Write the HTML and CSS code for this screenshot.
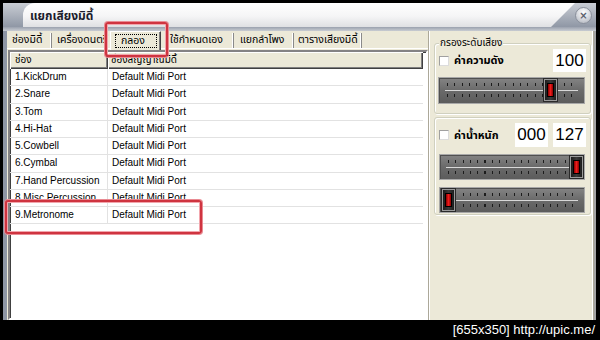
FILE: index.html
```html
<!DOCTYPE html>
<html lang="th">
<head>
<meta charset="utf-8">
<title>แยกเสียงมิดี้</title>
<link rel="stylesheet" href="styles.css">
</head>
<body>
<div class="window">
  <div class="titlebar">
    <div class="tb-main"><span class="title">แยกเสียงมิดี้</span></div>
    <div class="tb-close"><span class="close-btn">×</span></div>
  </div>
  <div class="tb-band"></div>
  <div class="body">
    <div class="left">
      <div class="tabs">
        <div class="tab t1">ช่องมิดี้</div>
        <div class="tab t2">เครื่องดนตรี</div>
        <div class="tab t3 selected"><span class="focus">กลอง</span></div>
        <div class="tab t4">ใช้กำหนดเอง</div>
        <div class="tab t5">แยกลำโพง</div>
        <div class="tab t6">ตารางเสียงมิดี้</div>
      </div>
      <div class="list">
        <div class="lv-header">
          <div class="hc c1">ช่อง</div>
          <div class="hc c2">ช่องสัญญาณมิดี้</div>
        </div>
        <div class="row"><div class="c1">1.KickDrum</div><div class="c2">Default Midi Port</div></div>
        <div class="row"><div class="c1">2.Snare</div><div class="c2">Default Midi Port</div></div>
        <div class="row"><div class="c1">3.Tom</div><div class="c2">Default Midi Port</div></div>
        <div class="row"><div class="c1">4.Hi-Hat</div><div class="c2">Default Midi Port</div></div>
        <div class="row"><div class="c1">5.Cowbell</div><div class="c2">Default Midi Port</div></div>
        <div class="row"><div class="c1">6.Cymbal</div><div class="c2">Default Midi Port</div></div>
        <div class="row"><div class="c1">7.Hand Percussion</div><div class="c2">Default Midi Port</div></div>
        <div class="row"><div class="c1">8.Misc Percussion</div><div class="c2">Default Midi Port</div></div>
        <div class="row"><div class="c1">9.Metronome</div><div class="c2">Default Midi Port</div></div>
      </div>
    </div>
    <div class="right">
      <div class="group g1">
        <div class="legend">กรองระดับเสียง</div>
        <div class="grow">
          <span class="check"></span>
          <span class="glabel">ค่าความดัง</span>
          <span class="value">100</span>
        </div>
        <div class="slider s1"><div class="thumb" style="left:105px"><i></i></div></div>
      </div>
      <div class="group g2">
        <div class="grow">
          <span class="check"></span>
          <span class="glabel">ค่าน้ำหนัก</span>
          <span class="value">000</span>
          <span class="value">127</span>
        </div>
        <div class="slider s2"><div class="thumb" style="left:130px"><i></i></div></div>
        <div class="slider s3"><div class="thumb" style="left:2px"><i></i></div></div>
      </div>
    </div>
  </div>
</div>
<div class="footer">[655x350] http://upic.me/</div>
<div class="mark mark-tab"></div>
<div class="mark mark-row"></div>
</body>
</html>
```
FILE: styles.css
```css
html, body {
  margin: 0;
  padding: 0;
}
body {
  width: 600px;
  height: 340px;
  background: #000;
  overflow: hidden;
  position: relative;
  font-family: Tahoma, "Noto Sans Thai", "Loma", "Garuda", "Norasi", "Liberation Sans", sans-serif;
  font-size: 11px;
  color: #000;
}
.window {
  height: 320px;
  box-sizing: border-box;
  padding: 3px 4px 0 3px;
  display: flex;
  flex-direction: column;
}
.titlebar {
  height: 24px;
  display: flex;
  background: linear-gradient(#c9cdd4, #8f97a5);
  flex: none;
}
.tb-main {
  flex: 1;
  margin-left: 20px;
  border-top-left-radius: 12px;
  background: linear-gradient(#ffffff, #f5f5f6 55%, #dfe0e3);
  clip-path: polygon(0 0, 100% 0, calc(100% - 24px) 100%, 0 100%);
  display: flex;
  align-items: center;
  padding-left: 7px;
}
.title {
  font-weight: bold;
  font-size: 12px;
  color: #1c1c2c;
  margin-top: 2px;
}
.tb-close {
  width: 21px;
  display: flex;
  align-items: center;
}
.close-btn {
  width: 15px;
  height: 15px;
  border-radius: 50%;
  border: 1px solid #8a909c;
  background: radial-gradient(circle at 50% 30%, #ffffff, #cfd2d8 60%, #a9aeb8);
  color: #5a606c;
  font-family: "DejaVu Sans", sans-serif;
  font-weight: bold;
  font-size: 10px;
  line-height: 15px;
  text-align: center;
  margin-top: 1px;
}
.tb-band {
  height: 4px;
  background: linear-gradient(#9aa1ae, #c8ccd2);
  flex: none;
}
.body {
  flex: 1;
  display: flex;
  background: #ece9d8;
  border-left: 4px solid #8d95a4;
  min-height: 0;
}
.left {
  width: 421px;
  display: flex;
  flex-direction: column;
}
.tabs {
  height: 17px;
  border-bottom: 1px solid #fff;
  display: flex;
  align-items: flex-start;
  padding-left: 1px;
  font-size: 10.5px;
}
.tab {
  box-sizing: border-box;
  height: 15px;
  margin-top: 2px;
  line-height: 14px;
  white-space: nowrap;
  border-right: 1px solid #8a8a8a;
  box-shadow: inset -1px 0 0 #fff;
  padding-left: 4px;
}
.t1 { width: 44px; }
.t2 { width: 58px; padding-left: 5px; border-right: none; box-shadow: none; overflow-x: clip; }
.t3 { width: 51px; }
.t4 { width: 73px; padding-left: 9px; }
.t5 { width: 60px; padding-left: 6px; }
.t6 { width: 68px; padding-left: 4px; }
.tab.selected {
  height: 19px;
  margin-top: 0;
  margin-bottom: -1px;
  background: #ece9d8;
  border-left: 1px solid #fff;
  border-top: 1px solid #fff;
  border-right: 1px solid #404040;
  box-shadow: inset -1px 0 0 #808080;
  padding: 2px 3px 0 4px;
  position: relative;
}
.focus {
  display: block;
  height: 12px;
  line-height: 12px;
  border: 1px dotted #000;
  padding-left: 5px;
}
.list {
  margin: 1px 0 0 1px;
  flex: 1;
  background: #fff;
  border: 2px solid;
  border-color: #848284 #fff #fff #848284;
  box-shadow: inset 1px 1px 0 #404040;
  font-family: "Liberation Sans", Arial, sans-serif;
  font-size: 10px;
  overflow: hidden;
}
.lv-header {
  display: flex;
  height: 17px;
  width: 413px;
  background: #ece9d8;
}
.hc {
  box-sizing: border-box;
  height: 17px;
  line-height: 16px;
  font-family: Tahoma, "Noto Sans Thai", "Loma", "Garuda", "Liberation Sans", sans-serif;
  box-shadow: inset 1px 1px 0 #fff, inset -1px -1px 0 #404040, inset -2px -2px 0 #808080;
}
.row {
  display: flex;
  height: 17.25px;
  width: 413px;
  box-sizing: border-box;
  border-bottom: 1px solid #e2e2e2;
  line-height: 16px;
}
.c1 {
  width: 98px;
  box-sizing: border-box;
  padding-left: 5px;
  white-space: nowrap;
}
.row .c1 { border-right: 1px solid #e2e2e2; }
.c2 {
  flex: 1;
  padding-left: 4px;
  white-space: nowrap;
}
.hc.c2 { padding-left: 3px; }
.right {
  flex: 1;
  box-sizing: border-box;
  border-left: 1px solid #aca899;
  box-shadow: inset 1px 0 0 #fff, inset -1px 0 0 #aca899, inset -2px 0 0 #fff;
  border-right: 2px solid #a3a3a3;
  padding: 12px 2px 0 5px;
}
.group {
  border: 1px solid #d0d0bf;
  border-radius: 3px;
  box-shadow: inset 1px 1px 0 #fff, 1px 1px 0 #fff;
  box-sizing: border-box;
  width: 157px;
}
.legend {
  display: table;
  margin: -7px 0 0 4px;
  padding: 0 1px;
  height: 9px;
  line-height: 12px;
  font-size: 10px;
  background: #ece9d8;
}
.grow {
  display: flex;
  align-items: center;
  gap: 5px;
}
.g1 .grow { height: 23px; }
.g1 { padding-bottom: 9px; }
.g2 { margin-top: 3px; padding-top: 5px; padding-bottom: 1px; }
.g2 .grow { height: 24px; }
.check {
  width: 10px;
  height: 10px;
  box-sizing: border-box;
  background: #fff;
  border: 1px solid;
  border-color: #a0a0a0 #dcdcdc #dcdcdc #a0a0a0;
  margin-left: 4px;
  flex: none;
}
.glabel {
  font-weight: bold;
  font-size: 11px;
  flex: 1;
}
.value {
  width: 33px;
  height: 100%;
  background: #fff;
  font-family: "Liberation Sans", Arial, sans-serif;
  font-size: 17px;
  line-height: 24px;
  text-align: center;
  flex: none;
}
.g1 .value { line-height: 23px; }
.grow .value:last-child { margin-right: 4px; }
.slider {
  position: relative;
  margin-left: 3px;
  width: 147px;
  height: 26px;
  box-sizing: border-box;
  border: 1px solid #a8a8a8;
  box-shadow: inset 1px 1px 0 #505050;
  background:
    repeating-linear-gradient(90deg, #1c1c1c 0 1px, transparent 1px 7.3px) 8px 5px / calc(100% - 16px) 3px no-repeat,
    repeating-linear-gradient(90deg, #1c1c1c 0 1px, transparent 1px 7.3px) 8px 16px / calc(100% - 16px) 3px no-repeat,
    linear-gradient(#d8d8d8, #d8d8d8) 6px 12px / calc(100% - 12px) 1px no-repeat,
    linear-gradient(#848484, #6a6a6a 50%, #5c5c5c);
}
.s1 { margin-top: 5px; height: 27px; }
.s2 { margin-top: 7px; margin-left: 4px; width: 146px; }
.s3 { margin-top: 7px; margin-left: 4px; width: 146px; }
.thumb {
  position: absolute;
  top: 1px;
  width: 13px;
  height: 22px;
  box-sizing: border-box;
  background: linear-gradient(90deg, #1c1c1c, #3a3a3a 50%, #1c1c1c);
  border: 1px solid #9a9a9a;
  box-shadow: 0 0 0 1px #2a2a2a;
  display: flex;
  align-items: center;
  justify-content: center;
}
.thumb i {
  display: block;
  width: 5px;
  height: 12px;
  background: linear-gradient(90deg, #8a0000, #ee1c1c 50%, #8a0000);
  border: 1px solid #000;
}
.footer {
  height: 20px;
  background: #000;
  color: #fff;
  text-align: right;
  padding-right: 5px;
  font-family: "Liberation Sans", Arial, sans-serif;
  font-size: 13px;
  line-height: 20px;
}
.mark {
  position: absolute;
  border: 2px solid #cf3440;
  border-radius: 3px;
  box-shadow: inset 0 0 0 1px #f2a6ad, 0 0 0 1px #e98b93;
}
.mark-tab {
  left: 105px;
  top: 22px;
  width: 59px;
  height: 31px;
}
.mark-row {
  left: 5px;
  top: 200px;
  width: 193px;
  height: 30px;
}
```
